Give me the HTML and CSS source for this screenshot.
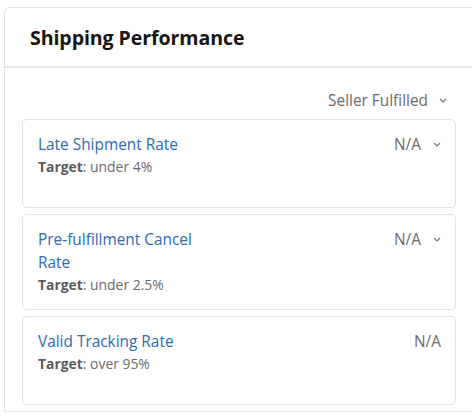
FILE: index.html
```html
<!DOCTYPE html>
<html>
<head>
<meta charset="utf-8">
<link rel="stylesheet" href="styles.css">
</head>
<body>
<div class="panel">
  <div class="panel-head">
    <h1 class="panel-title">Shipping Performance</h1>
  </div>
  <div class="panel-body">
    <div class="filter">
      <span>Seller Fulfilled</span>
      <svg class="chev" viewBox="0 0 8 5" width="8" height="5"><path d="M1 1 L4 4 L7 1" fill="none" stroke="#777" stroke-width="1.2"/></svg>
    </div>
    <div class="metric">
      <div class="metric-main">
        <a class="metric-name">Late Shipment Rate</a>
        <div class="metric-target"><b>Target</b>: under 4%</div>
      </div>
      <div class="metric-value">N/A<svg class="chev" viewBox="0 0 8 5" width="8" height="5"><path d="M1 1 L4 4 L7 1" fill="none" stroke="#777" stroke-width="1.2"/></svg></div>
    </div>
    <div class="metric">
      <div class="metric-main">
        <a class="metric-name narrow">Pre-fulfillment Cancel Rate</a>
        <div class="metric-target"><b>Target</b>: under 2.5%</div>
      </div>
      <div class="metric-value">N/A<svg class="chev" viewBox="0 0 8 5" width="8" height="5"><path d="M1 1 L4 4 L7 1" fill="none" stroke="#777" stroke-width="1.2"/></svg></div>
    </div>
    <div class="metric">
      <div class="metric-main">
        <a class="metric-name">Valid Tracking Rate</a>
        <div class="metric-target"><b>Target</b>: over 95%</div>
      </div>
      <div class="metric-value">N/A</div>
    </div>
  </div>
</div>
</body>
</html>
```

FILE: styles.css
```css
html, body {
  margin: 0;
  padding: 0;
  background: #fff;
  overflow: hidden;
}
body {
  font-family: "Open Sans", "Noto Sans", sans-serif;
  color: #111;
  padding: 7px 0 0 4px;
}
.panel {
  width: 480px;
  border: 1px solid #e3e3e3;
  border-radius: 6px 0 0 0;
  background: #fff;
}
.panel-head {
  height: 58px;
  display: flex;
  align-items: center;
  padding-left: 25px;
  border-bottom: 2px solid #e4e4e4;
}
.panel-title {
  margin: 0;
  font-size: 19.6px;
  font-weight: 700;
  color: #161616;
  letter-spacing: -0.1px;
}
.panel-body {
  width: 434px;
  padding: 21px 0 0 17px;
}
.filter {
  display: flex;
  justify-content: flex-end;
  align-items: center;
  gap: 11px;
  font-size: 15.4px;
  color: #6b6b6b;
  padding-right: 9px;
  height: 22px;
  margin-bottom: 8px;
}
.chev {
  display: block;
}
.metric {
  display: flex;
  justify-content: space-between;
  align-items: flex-start;
  min-height: 61px;
  padding: 13px 14px 13px 15px;
  border: 1px solid #e2e2e2;
  border-radius: 5px;
  margin-bottom: 6px;
}
.metric-main {
  display: flex;
  flex-direction: column;
}
.metric-name {
  font-size: 15.4px;
  line-height: 23px;
  color: #2a6cb3;
}
.metric-name.narrow {
  width: 175px;
}
.metric-target {
  font-size: 13.9px;
  line-height: 22px;
  color: #6a6a6a;
}
.metric-target b {
  color: #5b5b5b;
}
.metric-value {
  display: flex;
  align-items: center;
  gap: 12px;
  font-size: 15.4px;
  line-height: 23px;
  color: #6b6b6b;
}
```
